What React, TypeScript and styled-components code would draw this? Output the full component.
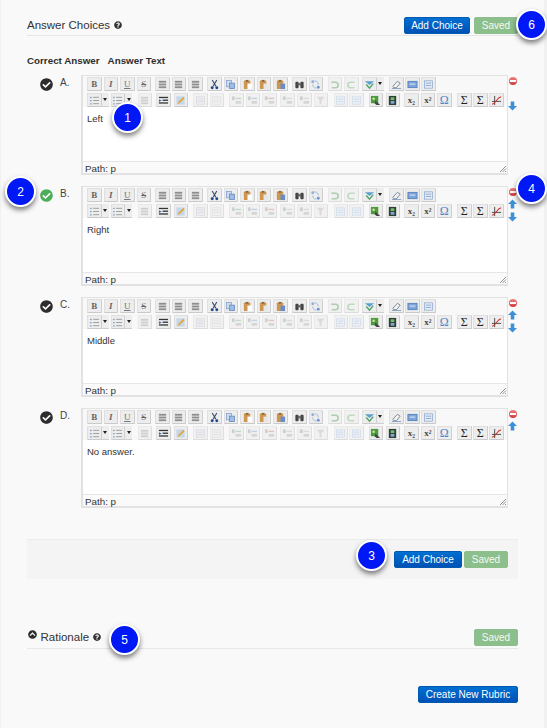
import React from "react";
import styled, { createGlobalStyle } from "styled-components";
import { FaCheckCircle, FaChevronCircleUp, FaQuestionCircle } from "react-icons/fa";

const GlobalStyle = createGlobalStyle`
    html, body {
        margin: 0;
        padding: 0;
        background: #f9f9f9;
    }
    * {
        box-sizing: border-box;
    }
`;

const Page = styled.div`
    position: relative;
    width: 547px;
    height: 728px;
    overflow: hidden;
    padding: 17px 29px 0 27px;
    background: #f9f9f9;
    color: #333;
    font-family: "Liberation Sans", Arial, sans-serif;
`;

const Gutter = styled.div`
    position: absolute;
    top: 0;
    bottom: 0;
    left: ${p => (p.$right ? "544px" : "0")};
    width: ${p => (p.$right ? "3px" : "1px")};
    background: #f1f1f1;
`;

const SectionHeader = styled.div`
    display: flex;
    align-items: flex-start;
    justify-content: space-between;
    height: 19px;
    border-bottom: 1px solid #e6e6e6;
`;

const Title = styled.h2`
    display: flex;
    align-items: center;
    gap: 3.5px;
    margin: 0;
    font-size: 11.5px;
    font-weight: 400;
    line-height: 16px;
    color: #333;
`;

const HelpIcon = styled(FaQuestionCircle)`
    width: 8px;
    height: 8px;
    color: #333;
`;

const Buttons = styled.div`
    display: flex;
    gap: ${p => p.$gap}px;
`;

const Button = styled.button`
    height: 17px;
    width: ${p => p.$width}px;
    padding: 0;
    border: 1px solid ${p => (p.$saved ? "#8cbf8c" : "#0259b0")};
    border-radius: 2px;
    background: ${p =>
        p.$saved ? "#8dbf8d" : "linear-gradient(#0070d2, #0051b5)"};
    color: ${p => (p.$saved ? "#f4faf4" : "#fff")};
    font-family: inherit;
    font-size: 10px;
    line-height: 15px;
`;

const ColumnLabels = styled.div`
    display: flex;
    gap: 8px;
    margin: 19px 0 9px;
    font-size: 9.8px;
    font-weight: 700;
    line-height: 11px;
    color: #2e2e2e;
`;

const ChoiceRow = styled.div`
    display: flex;
    height: 100px;
    margin-bottom: 11px;
`;

const Marker = styled.div`
    display: flex;
    align-items: flex-start;
    gap: 7px;
    width: 54px;
    padding: 2px 0 0 13px;
    font-size: 10px;
    line-height: 12px;
    color: #444;
`;

const CheckIcon = styled(FaCheckCircle)`
    flex: none;
    width: 13px;
    height: 13px;
    margin-top: 1px;
    color: ${p => (p.$correct ? "#4cae5b" : "#2d2d2d")};
`;

const Editor = styled.div`
    display: flex;
    flex-direction: column;
    width: 427px;
    border: 1px solid #e2e2e2;
    border-width: 1px 1px 2px 2px;
    background: #fff;
`;

const Toolbars = styled.div`
    display: flex;
    flex-direction: column;
    gap: 2px;
    height: 31px;
    padding: 1px 0 0 4px;
    background: #f8f8f8;
`;

const ToolRow = styled.div`
    display: flex;
    height: 14px;
`;

const ToolButton = styled.span`
    display: flex;
    flex: none;
    align-items: center;
    justify-content: center;
    width: 14.5px;
    height: 14px;
    margin-left: ${p => p.$left}px;
    border: 1px solid #e0e0e0;
    border-right-color: #cfcfcf;
    border-bottom-color: #cacaca;
    border-radius: 1px;
    background: #ededed;
    font-family: "Liberation Serif", serif;
    font-size: ${p => (p.$big ? 12 : 9)}px;
    font-weight: ${p => (p.$bold ? 700 : 400)};
    font-style: ${p => (p.$italic ? "italic" : "normal")};
    text-decoration: ${p => (p.$under ? "underline" : p.$strike ? "line-through" : "none")};
    color: ${p => p.$color};
    opacity: ${p => (p.$faded ? 0.6 : 1)};

    svg {
        display: block;
        width: 11px;
        height: 11px;
    }
`;

const Caret = styled.span`
    display: flex;
    flex: none;
    align-items: center;
    justify-content: center;
    width: 7px;
    height: 14px;
    background: #ededed;
    border-bottom: 1px solid #cfcfcf;

    &:after {
        content: "";
        border: 2.5px solid transparent;
        border-top: 3px solid #222;
        border-bottom: 0;
    }
`;

const Body = styled.div`
    flex: 1;
    padding: 6px 4px;
    background: #fff;
    font-size: 9.5px;
    line-height: 12px;
    color: #333;
`;

const PathBar = styled.div`
    position: relative;
    height: 12px;
    padding-left: 2px;
    border-top: 1px solid #e6e6e6;
    background: #fafafa;
    font-size: 9.8px;
    line-height: 14px;
    color: #333;
`;

const Grip = styled.svg`
    position: absolute;
    right: 0;
    bottom: 0;
    width: 8px;
    height: 8px;
`;

const Side = styled.div`
    display: flex;
    flex-direction: column;
    align-items: center;
    gap: 3px;
    width: 9px;
    padding-top: 2px;
`;

const RemoveDot = styled.span`
    display: flex;
    align-items: center;
    justify-content: center;
    width: 8px;
    height: 8px;
    border-radius: 50%;
    background: linear-gradient(#ee8080, #d23c3c);

    &:after {
        content: "";
        width: 6px;
        height: 1.5px;
        background: #fff;
    }
`;

const MoveArrow = styled.svg`
    display: block;
    width: 9px;
    height: 10px;
    transform: rotate(${p => (p.$down ? 180 : 0)}deg);
    visibility: ${p => (p.$hidden ? "hidden" : "visible")};
`;

const FooterPanel = styled.div`
    display: flex;
    align-items: center;
    justify-content: flex-end;
    height: 40px;
    margin-top: 31px;
    padding-right: 10px;
    border-top: 1px solid #ececec;
    background: #f4f4f4;
`;

const RationaleHeader = styled.div`
    display: flex;
    align-items: flex-start;
    justify-content: space-between;
    height: 20px;
    margin-top: 50px;
    border-bottom: 1px solid #e8e8e8;
`;

const CollapseIcon = styled(FaChevronCircleUp)`
    width: 9px;
    height: 9px;
    margin: 0 0 6px 1px;
    color: #2d2d2d;
`;

const RubricRow = styled.div`
    display: flex;
    justify-content: flex-end;
    margin-top: 37px;
`;

const Callout = styled.div`
    position: absolute;
    left: ${p => p.$x - 15}px;
    top: ${p => p.$y - 15}px;
    display: flex;
    align-items: center;
    justify-content: center;
    width: 31px;
    height: 31px;
    border: 2.5px solid #fff;
    border-radius: 50%;
    background: #0018f6;
    box-shadow: 0 3px 5px rgba(0, 0, 0, 0.5);
    color: #fff;
    font-size: 12px;
`;

const bars = (color: string, w = 8) => (
    <svg viewBox="0 0 12 12">
        {[2, 5, 8].map(y => (
            <rect key={y} x={(12 - w) / 2} y={y} width={w} height="2" fill={color} />
        ))}
    </svg>
);

const list = (
    <svg viewBox="0 0 12 12">
        {[2, 5.5, 9].map(y => (
            <g key={y}>
                <rect x="1" y={y} width="2" height="1.4" fill="#8aa8d0" />
                <rect x="4.5" y={y} width="6.5" height="1" fill="#999" />
            </g>
        ))}
    </svg>
);

const paste = (inner: string) => (
    <svg viewBox="0 0 12 12">
        <rect x="2" y="1.5" width="7" height="9.5" rx="1" fill="#cf9650" />
        <rect x="4" y="1" width="3" height="2" fill="#8a6a3c" />
        <rect x="6" y="5" width="5" height="6" fill={inner} />
    </svg>
);

const sheet = (fill: string, line: string) => (
    <svg viewBox="0 0 12 12">
        <rect x="1.5" y="2" width="9" height="8" fill={fill} stroke={line} strokeWidth="0.8" />
        <rect x="3" y="4" width="6" height="1" fill={line} />
        <rect x="3" y="6.5" width="6" height="1" fill={line} />
    </svg>
);

const tableCell = (accent: string) => (
    <svg viewBox="0 0 12 12">
        <rect x="1" y="1.5" width="3" height="4" fill="#b5b5b5" />
        <rect x="5" y="6.5" width="6" height="3" fill="#c0c0c0" />
        <rect x="5" y="3" width="6" height="1.5" fill={accent} />
    </svg>
);

const icons: Record<string, React.ReactNode> = {
    bullets: list,
    numbers: list,
    align: bars("#8e8e8e", 8),
    cut: (
        <svg viewBox="0 0 12 12">
            <path d="M3.5 1 L7.5 8 M8.5 1 L4.5 8" stroke="#3a4a6a" strokeWidth="1.2" fill="none" />
            <circle cx="3.5" cy="9.5" r="1.6" fill="#20468c" />
            <circle cx="8.5" cy="9.5" r="1.6" fill="#20468c" />
        </svg>
    ),
    copy: (
        <svg viewBox="0 0 12 12">
            <rect x="1.5" y="1.5" width="5.5" height="7" fill="#cfdcf0" stroke="#7f9ccb" strokeWidth="0.8" />
            <rect x="5" y="4.5" width="5.5" height="6" fill="#9fbce3" stroke="#5f85bd" strokeWidth="0.8" />
        </svg>
    ),
    paste: paste("#fff"),
    pasteText: paste("#e7e7e7"),
    pasteWord: paste("#6a8dc8"),
    find: (
        <svg viewBox="0 0 12 12">
            <rect x="1.5" y="3" width="3.5" height="7" rx="1" fill="#444" />
            <rect x="7" y="3" width="3.5" height="7" rx="1" fill="#444" />
            <rect x="4" y="4.5" width="4" height="2.5" fill="#666" />
        </svg>
    ),
    replace: (
        <svg viewBox="0 0 12 12">
            <circle cx="3" cy="3" r="1.6" fill="#8fb0dd" />
            <circle cx="9" cy="9" r="1.6" fill="#6f96d0" />
            <path d="M5 2 C8 2 9 4 9 6 M7 10 C4 10 3 8 3 6" stroke="#9ab7dc" fill="none" />
        </svg>
    ),
    undo: (
        <svg viewBox="0 0 12 12">
            <path d="M2.5 3.5 H7 A3 3 0 0 1 7 9.5 H3" stroke="#7fb27f" strokeWidth="1.8" fill="none" />
        </svg>
    ),
    redo: (
        <svg viewBox="0 0 12 12">
            <path d="M9.5 3.5 H5 A3 3 0 0 0 5 9.5 H9" stroke="#9cc79c" strokeWidth="1.8" fill="none" />
        </svg>
    ),
    spell: (
        <svg viewBox="0 0 12 12">
            <path d="M1 2.5 H11 L6 6.5 Z" fill="#5aa0cf" />
            <path d="M2.5 6 L6 10 L10 5" stroke="#4fa56a" strokeWidth="1.6" fill="none" />
        </svg>
    ),
    erase: (
        <svg viewBox="0 0 12 12">
            <path d="M2 8 L7 2.5 L10 4.5 L6 9.5 H3 Z" fill="#f3f3f3" stroke="#66748c" strokeWidth="0.9" />
            <rect x="1" y="10" width="10" height="0.8" fill="#6a8fc0" />
        </svg>
    ),
    banner: (
        <svg viewBox="0 0 12 12">
            <rect x="1" y="2.5" width="10" height="7" fill="#7ba5da" stroke="#4a76b2" strokeWidth="0.8" />
            <rect x="3" y="5" width="6" height="1.2" fill="#d6e4f5" />
        </svg>
    ),
    template: sheet("#e4ecf7", "#8ba7cd"),
    outdent: bars("#b5b5b5"),
    indent: (
        <svg viewBox="0 0 12 12">
            <rect x="1" y="2" width="10" height="1.4" fill="#333" />
            <rect x="5" y="5" width="6" height="1.4" fill="#333" />
            <rect x="1" y="8" width="10" height="1.4" fill="#333" />
            <path d="M1 4.5 L4 6 L1 7.5 Z" fill="#3a66a8" />
        </svg>
    ),
    pencil: (
        <svg viewBox="0 0 12 12">
            <rect x="1.5" y="1.5" width="9" height="9" fill="#c6d7ec" />
            <path d="M3 10 L4 7 L9 2 L10.5 3.5 L5.5 8.5 Z" fill="#e3a83c" />
        </svg>
    ),
    hr: sheet("#e9e9ee", "#c2c2d0"),
    page: sheet("#eeeeee", "#cfcfcf"),
    cellGreen: tableCell("#9cc79c"),
    cellBlue: tableCell("#9db8dc"),
    cellRed: tableCell("#e09a9a"),
    merge: tableCell("#c8c8c8"),
    funnel: (
        <svg viewBox="0 0 12 12">
            <path d="M2 2 H10 L7 6 V10 H5 V6 Z" fill="#cfc4c4" />
        </svg>
    ),
    frame: sheet("#e2eaf5", "#b9c9df"),
    image: (
        <svg viewBox="0 0 12 12">
            <rect x="1" y="1" width="8" height="8" fill="#4e9a3e" />
            <circle cx="4" cy="4" r="1.4" fill="#cbe3a0" />
            <path d="M6 6 L11 11 H7 L5 9 Z" fill="#444" />
        </svg>
    ),
    film: (
        <svg viewBox="0 0 12 12">
            <rect x="2" y="1" width="8" height="10" fill="#2f3f33" />
            <rect x="4" y="2.5" width="4" height="3" fill="#6fbf6f" />
            <rect x="4" y="6.5" width="4" height="3" fill="#7fa8d8" />
        </svg>
    ),
    chart: (
        <svg viewBox="0 0 12 12">
            <path d="M4 1 V11 M1 7 H11" stroke="#333" strokeWidth="0.9" />
            <path d="M1 10 C5 10 6 3 11 2" stroke="#d02c2c" strokeWidth="1.1" fill="none" />
        </svg>
    ),
};

type Tool = {
    icon?: string;
    text?: string;
    left?: number;
    faded?: boolean;
    caret?: boolean;
    color?: string;
    bold?: boolean;
    italic?: boolean;
    under?: boolean;
    strike?: boolean;
    big?: boolean;
};

const firstRow: Tool[] = [
    { text: "B", bold: true, color: "#666" },
    { text: "I", italic: true, bold: true, left: 2, color: "#666" },
    { text: "U", under: true, left: 2, color: "#777" },
    { text: "S", strike: true, left: 2, color: "#666" },
    { icon: "align", left: 4 },
    { icon: "align", left: 2 },
    { icon: "align", left: 2 },
    { icon: "cut", left: 4.5 },
    { icon: "copy", left: 2 },
    { icon: "paste", left: 2 },
    { icon: "pasteText", left: 2 },
    { icon: "pasteWord", left: 2 },
    { icon: "find", left: 4.5 },
    { icon: "replace", left: 2 },
    { icon: "undo", left: 4.5, faded: true },
    { icon: "redo", left: 2, faded: true },
    { icon: "spell", left: 3.5, caret: true },
    { icon: "erase", left: 5.5 },
    { icon: "banner", left: 1.5 },
    { icon: "template", left: 1.5 },
];

const secondRow: Tool[] = [
    { icon: "bullets", caret: true },
    { icon: "numbers", left: 2, caret: true },
    { icon: "outdent", left: 5.5, faded: true },
    { icon: "indent", left: 4 },
    { icon: "pencil", left: 3 },
    { icon: "hr", left: 5, faded: true },
    { icon: "page", left: 2, faded: true },
    { icon: "cellGreen", left: 5, faded: true },
    { icon: "cellBlue", left: 2, faded: true },
    { icon: "cellRed", left: 2, faded: true },
    { icon: "merge", left: 3.5, faded: true },
    { icon: "merge", left: 2.5, faded: true },
    { icon: "funnel", left: 2, faded: true },
    { icon: "frame", left: 5.5, faded: true },
    { icon: "frame", left: 1, faded: true },
    { icon: "image", left: 5 },
    { icon: "film", left: 2.5 },
    { text: "x₂", bold: true, left: 4, color: "#444" },
    { text: "x²", bold: true, left: 2, color: "#444" },
    { text: "Ω", left: 2, color: "#4a86c8", big: true },
    { text: "Σ", left: 5.5, color: "#222", big: true },
    { text: "Σ", left: 1.5, color: "#222", big: true },
    { icon: "chart", left: 1.5 },
];

const ToolbarRow = ({ tools }: { tools: Tool[] }) => (
    <ToolRow>
        {tools.map((t, i) => (
            <React.Fragment key={i}>
                <ToolButton
                    $left={t.left || 0}
                    $faded={t.faded}
                    $color={t.color}
                    $bold={t.bold}
                    $italic={t.italic}
                    $under={t.under}
                    $strike={t.strike}
                    $big={t.big}
                >
                    {t.icon ? icons[t.icon] : t.text}
                </ToolButton>
                {t.caret && <Caret />}
            </React.Fragment>
        ))}
    </ToolRow>
);

const Arrow = ({ down, hidden }: { down?: boolean; hidden?: boolean }) => (
    <MoveArrow viewBox="0 0 9 10" $down={down} $hidden={hidden}>
        <path d="M4.5 0.5 L9 5 H6.3 V9.5 H2.7 V5 H0 Z" fill="#3d8fd6" />
    </MoveArrow>
);

const choices = [
    { letter: "A", text: "Left", up: false, down: true },
    { letter: "B", text: "Right", up: true, down: true, correct: true },
    { letter: "C", text: "Middle", up: true, down: true },
    { letter: "D", text: "No answer.", up: true, down: false },
];

const callouts = [
    { n: 1, x: 127, y: 117 },
    { n: 2, x: 20, y: 191 },
    { n: 3, x: 371, y: 555 },
    { n: 4, x: 531, y: 188 },
    { n: 5, x: 124, y: 639 },
    { n: 6, x: 531, y: 24 },
];

const App = () => (
    <Page>
        <GlobalStyle />
        <Gutter />
        <Gutter $right />
        <SectionHeader>
            <Title>
                Answer Choices <HelpIcon />
            </Title>
            <Buttons $gap={4}>
                <Button $width={66}>Add Choice</Button>
                <Button $saved $width={44}>
                    Saved
                </Button>
            </Buttons>
        </SectionHeader>
        <ColumnLabels>
            <span>Correct Answer</span>
            <span>Answer Text</span>
        </ColumnLabels>
        {choices.map(c => (
            <ChoiceRow key={c.letter}>
                <Marker>
                    <CheckIcon $correct={c.correct} />
                    {c.letter}.
                </Marker>
                <Editor>
                    <Toolbars>
                        <ToolbarRow tools={firstRow} />
                        <ToolbarRow tools={secondRow} />
                    </Toolbars>
                    <Body>{c.text}</Body>
                    <PathBar>
                        Path: p
                        <Grip viewBox="0 0 8 8">
                            <path d="M1 7 L7 1 M3.5 7 L7 3.5 M6 7 L7 6" stroke="#777" strokeWidth="0.8" />
                        </Grip>
                    </PathBar>
                </Editor>
                <Side>
                    <RemoveDot />
                    <Arrow hidden={!c.up} />
                    {c.down && <Arrow down />}
                </Side>
            </ChoiceRow>
        ))}
        <FooterPanel>
            <Buttons $gap={2}>
                <Button $width={68}>Add Choice</Button>
                <Button $saved $width={44}>
                    Saved
                </Button>
            </Buttons>
        </FooterPanel>
        <RationaleHeader>
            <Title>
                <CollapseIcon />
                Rationale <HelpIcon />
            </Title>
            <Button $saved $width={44}>
                Saved
            </Button>
        </RationaleHeader>
        <RubricRow>
            <Button $width={100}>Create New Rubric</Button>
        </RubricRow>
        {callouts.map(c => (
            <Callout key={c.n} $x={c.x} $y={c.y}>
                {c.n}
            </Callout>
        ))}
    </Page>
);

export default App;
